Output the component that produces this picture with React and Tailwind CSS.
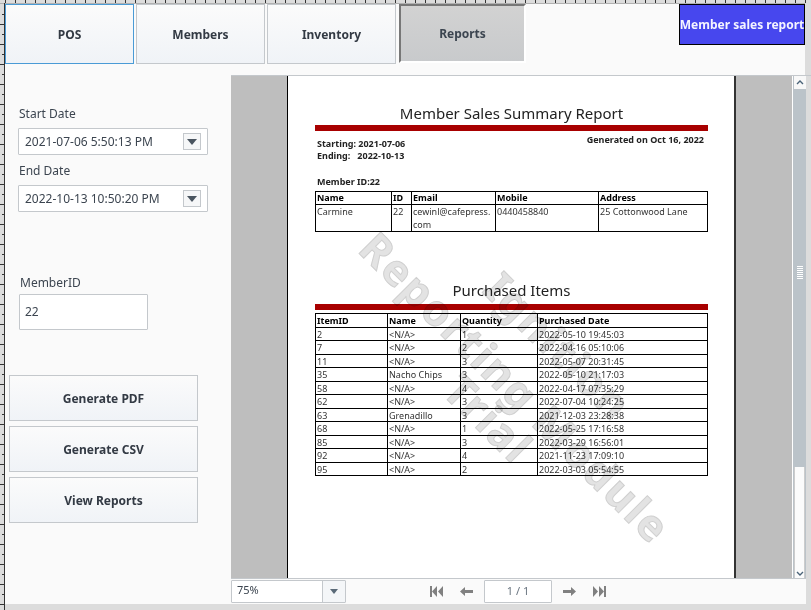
function Btn({ children, cls }) {
  return (
    <button className={"flex items-center justify-center border bg-gradient-to-b from-[#fbfbfb] to-[#f0f3f7] pt-[1px] text-[12px] font-bold text-[#333a44] " + cls}>
      {children}
    </button>
  );
}
function Caret() {
  return (
    <svg width="10" height="6" viewBox="0 0 10 6"><path d="M0 0h10L5 6z" fill="#4a5560" /></svg>
  );
}
function DateField({ value }) {
  return (
    <div className="flex h-[27px] w-[190px] items-center justify-between rounded-[1px] border border-[#c4c8cc] bg-white pl-[6px] pr-[6px] text-[12px] text-[#3c4550]">
      <span>{value}</span>
      <span className="flex h-[17px] w-[18px] items-center justify-center border border-[#c4c8cc] bg-[#f6f7f8]"><Caret /></span>
    </div>
  );
}
function Ruler() {
  const h = [];
  for (let x = 5; x < 811; x += 10) h.push(x);
  const v = [];
  for (let y = 14; y < 610; y += 10) v.push(y);
  return (
    <svg className="absolute left-0 top-0" width="811" height="610">
      <rect x="0" y="3" width="805" height="1" fill="#b0b0b0" />
      <rect x="4" y="3" width="1" height="607" fill="#333" />
      {h.map((x) => <rect key={x} x={x} y="0" width="1" height="3" fill="#333" />)}
      {v.map((y, i) => <rect key={y} x={i % 2 ? 0 : 2} y={y} width={i % 2 ? 4 : 2} height="1" fill="#333" />)}
    </svg>
  );
}
function Table({ cols, rows, header, rowH, cls }) {
  return (
    <table className={"w-[393px] table-fixed border-collapse text-[9px] leading-[11px] text-[#333] " + cls}>
      <colgroup>{cols.map((c, i) => <col key={i} style={{ width: c }} />)}</colgroup>
      <thead>
        <tr>{header.map((h) => <th key={h} className="border border-black px-[1px] py-0 text-left font-bold text-black" style={{ height: rowH }}>{h}</th>)}</tr>
      </thead>
      <tbody>
        {rows.map((r, i) => (
          <tr key={i}>{r.map((c, j) => <td key={j} className="border border-black px-[1px] pb-0 pt-[1px] align-top" style={{ height: rowH }}>{c}</td>)}</tr>
        ))}
      </tbody>
    </table>
  );
}
const items = [
  ["2", "<N/A>", "1", "2022-05-10 19:45:03"],
  ["7", "<N/A>", "2", "2022-04-16 05:10:06"],
  ["11", "<N/A>", "3", "2022-05-07 20:31:45"],
  ["35", "Nacho Chips", "3", "2022-05-10 21:17:03"],
  ["58", "<N/A>", "4", "2022-04-17 07:35:29"],
  ["62", "<N/A>", "3", "2022-07-04 10:24:25"],
  ["63", "Grenadillo", "3", "2021-12-03 23:28:38"],
  ["68", "<N/A>", "1", "2022-05-25 17:16:58"],
  ["85", "<N/A>", "3", "2022-03-29 16:56:01"],
  ["92", "<N/A>", "4", "2021-11-23 17:09:10"],
  ["95", "<N/A>", "2", "2022-03-03 05:54:55"],
];
function Watermark() {
  const cls = "absolute -translate-x-1/2 -translate-y-1/2 rotate-45 whitespace-nowrap font-bold text-[43px] leading-none tracking-[2px] text-[#e3e3e3] [-webkit-text-stroke:1px_#d0d0d0] mix-blend-multiply";
  return (
    <div className="pointer-events-none absolute inset-0">
      <span className={cls + " left-[228px] top-[311px]"}>Reporting Module</span>
      <span className={cls + " left-[271px] top-[270px]"}>Ignition</span>
      <span className={cls + " left-[201px] top-[342px]"}>Trial</span>
    </div>
  );
}
export default function App() {
  return (
    <div className="relative h-[610px] w-[811px] overflow-hidden bg-[#dcdcdc] font-['Noto_Sans',sans-serif]">
      <div className="absolute left-[5px] top-[4px] h-[600px] w-[800px] bg-[#fafafa]" />
      <Ruler />
      <div className="relative flex h-full flex-col pl-[5px] pt-[4px]">
        <div className="flex h-[60px] items-start">
          <Btn cls="h-[60px] w-[129px] border-[#4a9bd6]">POS</Btn>
          <Btn cls="ml-[2px] h-[60px] w-[129px] border-[#c4c8cc]">Members</Btn>
          <Btn cls="ml-[2px] h-[60px] w-[129px] border-[#c4c8cc]">Inventory</Btn>
          <button className="ml-[3px] flex h-[59px] w-[127px] items-center justify-center border-2 border-l-[#777] border-t-[#777] border-b-white border-r-white bg-gradient-to-b from-[#d2d2d2] to-[#c8cacc] pt-[1px] text-[12px] font-bold text-[#3c4550]">Reports</button>
          <div className="ml-[153px] flex h-[41px] w-[126px] items-center justify-center whitespace-nowrap border border-black bg-[#4747ee] text-[12px] font-bold text-[#f4f4ff]">Member sales report</div>
        </div>
        <div className="flex flex-1">
          <div className="w-[226px] shrink-0">
            <div className="ml-[14px] mt-[41px] text-[12px] leading-[17px] text-[#3c4550]">Start Date</div>
            <div className="ml-[13px] mt-[6px]"><DateField value="2021-07-06 5:50:13 PM" /></div>
            <div className="ml-[14px] mt-[7px] text-[12px] leading-[17px] text-[#3c4550]">End Date</div>
            <div className="ml-[13px] mt-[6px]"><DateField value="2022-10-13 10:50:20 PM" /></div>
            <div className="ml-[15px] mt-[62px] text-[12px] leading-[17px] text-[#3c4550]">MemberID</div>
            <div className="ml-[14px] mt-[3px] flex h-[36px] w-[129px] items-center rounded-[1px] border border-[#c4c8cc] bg-white pl-[5px] text-[12px] text-[#3c4550]">22</div>
            <div className="ml-[4px] mt-[45px] flex w-[189px] flex-col gap-[5px]">
              <Btn cls="h-[46px] border-[#c4c8cc]">Generate PDF</Btn>
              <Btn cls="h-[46px] border-[#c4c8cc]">Generate CSV</Btn>
              <Btn cls="h-[46px] border-[#c4c8cc]">View Reports</Btn>
            </div>
          </div>
          <div className="mt-[11px] flex flex-1 flex-col border-t border-[#c4c8cc] pb-[6px] pr-[5px]">
            <div className="flex h-[502px]">
              <div className="flex flex-1 justify-center overflow-hidden bg-[#bebebe] pr-[1px]">
                <div className="relative ml-[1px] h-full w-[449px] border-l border-r-2 border-l-black border-r-[#333] bg-white">
                  <div className="pl-[27px] pr-[26px]">
                    <div className="mt-[27px] text-center text-[15px] leading-[21px] text-[#222]">Member Sales Summary Report</div>
                    <div className="mt-[1px] h-[6px] w-[393px] bg-[#a80000]" />
                    <div className="relative h-[45px] text-[9px] font-bold leading-[12px] text-[#222]">
                      <div className="absolute right-[4px] top-[3px]">Generated on Oct 16, 2022</div>
                      <div className="pl-[2px] pt-[7px]">Starting: 2021-07-06</div>
                      <div className="pl-[2px]">Ending:&nbsp;&nbsp; 2022-10-13</div>
                    </div>
                    <div className="pl-[2px] text-[9px] font-bold leading-[12px] text-[#222]">Member ID:22</div>
                    <table className="mt-[3px] w-[393px] table-fixed border-collapse text-[9px] leading-[13px] text-[#333]">
                      <colgroup><col style={{ width: 76 }} /><col style={{ width: 20 }} /><col style={{ width: 84 }} /><col style={{ width: 103 }} /><col /></colgroup>
                      <thead><tr className="h-[12px]">{["Name", "ID", "Email", "Mobile", "Address"].map((h) => <th key={h} className="border border-black px-[1px] py-0 text-left font-bold leading-[12px] text-black">{h}</th>)}</tr></thead>
                      <tbody>
                        <tr className="h-[27px]">
                          <td className="border border-black px-[1px] py-0 align-top">Carmine</td>
                          <td className="border border-black px-[1px] py-0 align-top">22</td>
                          <td className="border border-black px-[1px] py-0 align-top">cewinl@cafepress.<br />com</td>
                          <td className="border border-black px-[1px] py-0 align-top">0440458840</td>
                          <td className="border border-black px-[1px] py-0 align-top">25 Cottonwood Lane</td>
                        </tr>
                      </tbody>
                    </table>
                    <div className="mt-[48px] text-center text-[15px] leading-[20px] text-[#222]">Purchased Items</div>
                    <div className="mt-[4px] h-[6px] w-[393px] bg-[#a80000]" />
                    <Table cls="mt-[3px]" cols={[72, 73, 77]} header={["ItemID", "Name", "Quantity", "Purchased Date"]} rows={items} rowH={13.5} />
                  </div>
                  <Watermark />
                </div>
              </div>
              <div className="relative flex w-[14px] shrink-0 flex-col items-center border-l border-white bg-[#bbc3c9]">
                <div className="flex h-[13px] w-[12px] items-center justify-center bg-[#f8f8f8]">
                  <svg width="8" height="5" viewBox="0 0 8 5"><path d="M1 4l3-3 3 3" fill="none" stroke="#4a6378" strokeWidth="1.4" /></svg>
                </div>
                <div className="mt-[177px] flex flex-col gap-[1px]">
                  {[0, 1, 2, 3, 4, 5, 6].map((i) => <div key={i} className="h-[1px] w-[6px] bg-white" />)}
                </div>
                <div className="mt-auto flex h-[111px] w-[11px] items-end justify-center border-x border-[#ccc] bg-[#fbfbfb] pb-[2px]">
                  <svg width="8" height="5" viewBox="0 0 8 5"><path d="M1 1l3 3 3-3" fill="none" stroke="#4a6378" strokeWidth="1.4" /></svg>
                </div>
              </div>
            </div>
            <div className="flex h-[26px] items-center border-t border-[#c4c8cc] bg-[#fafafa]">
              <div className="flex h-[23px] w-[115px] items-stretch rounded-[1px] border border-[#c4c8cc] bg-white text-[11px] text-[#3c4550]">
                <span className="flex flex-1 items-center pb-[2px] pl-[5px]">75%</span>
                <span className="flex w-[23px] items-center justify-center border-l border-[#c4c8cc] bg-[#f4f6f8]"><svg width="8" height="5" viewBox="0 0 8 5"><path d="M0 0h8L4 5z" fill="#5a6a78" /></svg></span>
              </div>
              <svg className="ml-[84px]" width="13" height="11" viewBox="0 0 13 11" fill="#808080"><rect x="0" y="0" width="2" height="11" /><path d="M7 0v11L2 5.5zM13 0v11L8 5.5z" /></svg>
              <svg className="ml-[17px]" width="13" height="9" viewBox="0 0 13 9" fill="#808080"><path d="M0 4.5L5 0v3h8v3H5v3z" /></svg>
              <div className="ml-[11px] flex h-[23px] w-[68px] items-center justify-center rounded-[1px] border border-[#c4c8cc] bg-white text-[11px] text-[#6a7580]">1 / 1</div>
              <svg className="ml-[11px]" width="13" height="9" viewBox="0 0 13 9" fill="#808080"><path d="M13 4.5L8 0v3H0v3h8v3z" /></svg>
              <svg className="ml-[17px]" width="13" height="11" viewBox="0 0 13 11" fill="#808080"><rect x="11" y="0" width="2" height="11" /><path d="M6 0v11l5-5.5zM0 0v11l5-5.5z" /></svg>
            </div>
          </div>
        </div>
      </div>
    </div>
  );
}
